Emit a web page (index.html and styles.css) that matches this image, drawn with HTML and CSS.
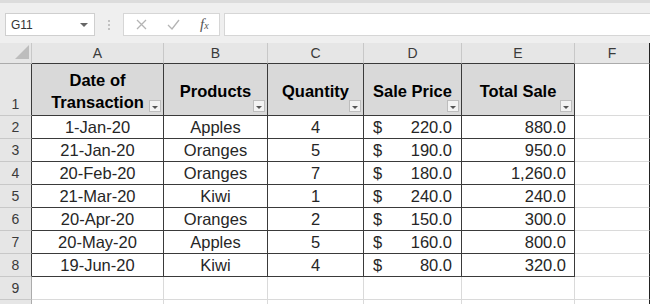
FILE: index.html
```html
<!DOCTYPE html>
<html lang="en">
<head>
    <meta charset="UTF-8">
    <title>Sales Sheet</title>
    <link rel="stylesheet" href="styles.css">
</head>
<body>

    <!-- Name box and formula bar -->
    <div class="toolbar">
        <div class="name-box">
            <span>G11</span>
            <span class="caret"></span>
        </div>
        <div class="dots"><i></i><i></i><i></i></div>
        <div class="fx-buttons">
            <svg width="11" height="11" viewBox="0 0 11 11"><path d="M1 1L10 10M10 1L1 10" stroke="#b4b4b4" stroke-width="1.3" fill="none"/></svg>
            <svg width="13" height="11" viewBox="0 0 13 11"><path d="M1 6L5 10L12 1" stroke="#b4b4b4" stroke-width="1.3" fill="none"/></svg>
            <span class="fx">f<small>x</small></span>
        </div>
        <div class="formula-input"></div>
    </div>

    <div class="sheet">
        <div class="row heads">
            <div class="corner">
                <svg width="16" height="15" viewBox="0 0 16 15"><path d="M15 0V14H1Z" fill="#bdbdbd"/></svg>
            </div>
            <div class="ch edge">A</div>
            <div class="ch edge">B</div>
            <div class="ch edge">C</div>
            <div class="ch edge">D</div>
            <div class="ch edge">E</div>
            <div class="ch">F</div>
        </div>

        <div class="row title-row">
            <div class="rn edge">1</div>
            <div class="th">Date of<br>Transaction<span class="filter"></span></div>
            <div class="th">Products<span class="filter"></span></div>
            <div class="th">Quantity<span class="filter"></span></div>
            <div class="th">Sale Price<span class="filter"></span></div>
            <div class="th">Total Sale<span class="filter"></span></div>
            <div class="cell last"></div>
        </div>

        <div class="row">
            <div class="rn edge">2</div>
            <div class="td center">1-Jan-20</div>
            <div class="td center">Apples</div>
            <div class="td center">4</div>
            <div class="td money"><span>$</span><span>220.0</span></div>
            <div class="td right">880.0</div>
            <div class="cell last"></div>
        </div>
        <div class="row">
            <div class="rn edge">3</div>
            <div class="td center">21-Jan-20</div>
            <div class="td center">Oranges</div>
            <div class="td center">5</div>
            <div class="td money"><span>$</span><span>190.0</span></div>
            <div class="td right">950.0</div>
            <div class="cell last"></div>
        </div>
        <div class="row">
            <div class="rn edge">4</div>
            <div class="td center">20-Feb-20</div>
            <div class="td center">Oranges</div>
            <div class="td center">7</div>
            <div class="td money"><span>$</span><span>180.0</span></div>
            <div class="td right">1,260.0</div>
            <div class="cell last"></div>
        </div>
        <div class="row">
            <div class="rn edge">5</div>
            <div class="td center">21-Mar-20</div>
            <div class="td center">Kiwi</div>
            <div class="td center">1</div>
            <div class="td money"><span>$</span><span>240.0</span></div>
            <div class="td right">240.0</div>
            <div class="cell last"></div>
        </div>
        <div class="row">
            <div class="rn edge">6</div>
            <div class="td center">20-Apr-20</div>
            <div class="td center">Oranges</div>
            <div class="td center">2</div>
            <div class="td money"><span>$</span><span>150.0</span></div>
            <div class="td right">300.0</div>
            <div class="cell last"></div>
        </div>
        <div class="row">
            <div class="rn edge">7</div>
            <div class="td center">20-May-20</div>
            <div class="td center">Apples</div>
            <div class="td center">5</div>
            <div class="td money"><span>$</span><span>160.0</span></div>
            <div class="td right">800.0</div>
            <div class="cell last"></div>
        </div>
        <div class="row">
            <div class="rn edge">8</div>
            <div class="td center">19-Jun-20</div>
            <div class="td center">Kiwi</div>
            <div class="td center">4</div>
            <div class="td money"><span>$</span><span>80.0</span></div>
            <div class="td right">320.0</div>
            <div class="cell last"></div>
        </div>
        <div class="row">
            <div class="rn">9</div>
            <div class="cell"></div>
            <div class="cell"></div>
            <div class="cell"></div>
            <div class="cell"></div>
            <div class="cell"></div>
            <div class="cell last"></div>
        </div>
        <!-- only the top edge of row 10 is visible -->
        <div class="row">
            <div class="rn"></div>
            <div class="cell"></div>
            <div class="cell"></div>
            <div class="cell"></div>
            <div class="cell"></div>
            <div class="cell"></div>
            <div class="cell last"></div>
        </div>
    </div>

</body>
</html>
```

FILE: styles.css
```css
* {
    box-sizing: border-box;
}
body {
    margin: 0;
    width: 650px;
    height: 304px;
    overflow: hidden;
    background: #ffffff;
    font-family: "Liberation Sans", Arial, sans-serif;
    color: #262626;
}

/* toolbar */
.toolbar {
    height: 43px;
    display: flex;
    align-items: flex-start;
    padding: 10px 0 0 5px;
    background: #efefef;
    border-top: 3px solid #dcdcdc;
}
.name-box {
    width: 90px;
    height: 23px;
    display: flex;
    align-items: center;
    justify-content: space-between;
    padding: 0 6px 0 5px;
    background: #fff;
    border: 1px solid #cfcfcf;
    font-size: 12px;
    color: #333;
}
.caret {
    width: 0;
    height: 0;
    border-left: 4px solid transparent;
    border-right: 4px solid transparent;
    border-top: 4px solid #666;
}
.dots {
    width: 28px;
    height: 23px;
    display: flex;
    flex-direction: column;
    align-items: center;
    justify-content: center;
    gap: 2px;
}
.dots i {
    width: 2px;
    height: 2px;
    background: #c2c2c2;
}
.fx-buttons {
    width: 97px;
    height: 23px;
    display: flex;
    align-items: center;
    gap: 20px;
    padding-left: 12px;
    background: #fff;
    border: 1px solid #d6d6d6;
}
.fx {
    font-family: "Liberation Serif", serif;
    font-style: italic;
    font-size: 15px;
    color: #555;
}
.fx small {
    font-size: 10px;
}
.formula-input {
    flex: 1;
    height: 23px;
    margin-left: 4px;
    background: #fff;
    border: 1px solid #d6d6d6;
    border-right: none;
}

/* grid */
.row {
    display: grid;
    grid-template-columns: 32px 132px 104px 96px 98px 113px 75px;
    height: 23px;
}
.row > div {
    border-right: 1px solid #dadada;
    border-bottom: 1px solid #dadada;
}
.heads {
    height: 21px;
}
.heads > div {
    background: #e6e6e6;
    border-right-color: #c8c8c8;
    border-bottom-color: #ababab;
}
.corner {
    display: flex;
    align-items: flex-end;
    justify-content: flex-end;
    padding: 0 1px 3px 0;
}
.ch {
    text-align: center;
    font-size: 14px;
    line-height: 20px;
    color: #3a3a3a;
}
.heads .ch.edge {
    border-bottom-color: #3a3a3a;
}
.rn {
    background: #e6e6e6;
    font-size: 14px;
    color: #3a3a3a;
    text-align: center;
    line-height: 22px;
    border-right-color: #ababab !important;
    border-bottom-color: #c8c8c8 !important;
}
.rn.edge {
    border-right-color: #3a3a3a !important;
}
.title-row {
    height: 52px;
}
.title-row .rn {
    line-height: 20px;
    padding-top: 30px;
}
.th {
    position: relative;
    display: flex;
    align-items: center;
    justify-content: center;
    text-align: center;
    background: #d9d9d9;
    font-weight: bold;
    font-size: 16.5px;
    line-height: 22px;
    color: #000;
    padding-top: 2px;
}
.row .th,
.row .td {
    border-right-color: #3a3a3a;
    border-bottom-color: #3a3a3a;
}
.filter {
    position: absolute;
    right: 2px;
    bottom: 3px;
    width: 12px;
    height: 12px;
    background: #f3f3f3;
    border: 1px solid #bdbdbd;
}
.filter::after {
    content: "";
    position: absolute;
    left: 2px;
    top: 5px;
    border-left: 3px solid transparent;
    border-right: 3px solid transparent;
    border-top: 3px solid #555;
}
.td {
    font-size: 16.5px;
    line-height: 22px;
}
.center {
    text-align: center;
}
.right {
    text-align: right;
    padding-right: 8px;
}
.money {
    display: flex;
    justify-content: space-between;
    padding: 0 9px;
}
.row .last {
    border-right-color: #222;
}
.heads .ch:last-child {
    border-right-color: #222;
}
```
